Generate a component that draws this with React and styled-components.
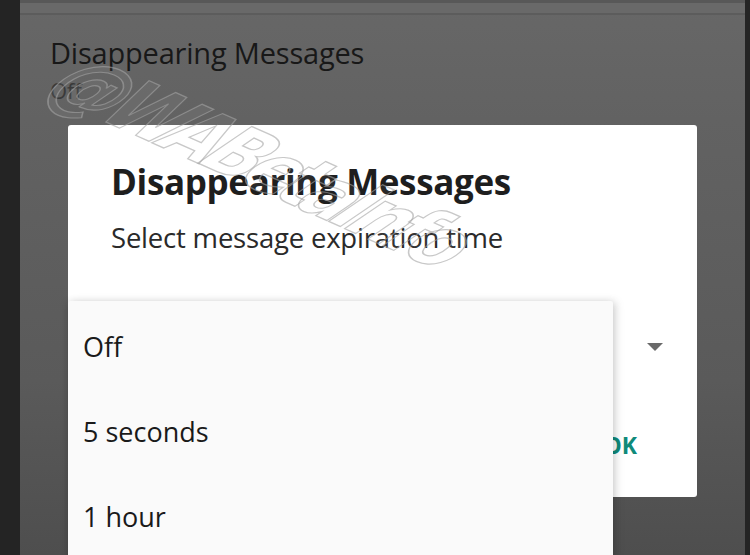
import React from "react";
import styled, { createGlobalStyle } from "styled-components";

const GlobalStyle = createGlobalStyle`
  html, body {
    margin: 0;
    padding: 0;
    background: #252525;
  }
  body {
    font-family: "Open Sans", "Noto Sans", sans-serif;
  }
`;

const Page = styled.div`
  display: flex;
  width: 750px;
  height: 555px;
  overflow: hidden;
  position: relative;
`;

const Strip = styled.div`
  width: ${(p) => p.w}px;
  flex-shrink: 0;
  background: #242424;
`;

const Screen = styled.div`
  flex: 1;
  display: flex;
  flex-direction: column;
  background: linear-gradient(#676767 0, #626262 120px, #5a5a5a 380px, #4e4e4e 555px);
`;

const TopEdge = styled.div`
  height: 10px;
  border-top: 3px solid #585858;
  border-bottom: 2px solid #5c5c5c;
  background: #696969;
`;

const SettingRow = styled.div`
  display: flex;
  flex-direction: column;
  padding: 18px 30px 0;
  height: 92px;
`;

const SettingTitle = styled.div`
  font-size: 29px;
  line-height: 40px;
  color: #181818;
  letter-spacing: -0.2px;
`;

const SettingValue = styled.div`
  font-size: 22px;
  line-height: 34px;
  color: #3a3a3a;
`;

const DialogArea = styled.div`
  padding-left: 48px;
`;

const Dialog = styled.div`
  position: relative;
  width: 629px;
  height: 372px;
  background: #fff;
  border-radius: 3px;
  box-sizing: border-box;
  padding: 33px 43px 0;
  display: flex;
  flex-direction: column;
`;

const Title = styled.div`
  font-size: 35px;
  font-weight: 700;
  line-height: 48px;
  color: #1e1e1e;
  letter-spacing: -0.35px;
`;

const Subtitle = styled.div`
  margin-top: 14px;
  font-size: 27.5px;
  line-height: 36px;
  color: #2a2a2a;
  letter-spacing: -0.2px;
`;

const Spinner = styled.div`
  display: flex;
  justify-content: flex-end;
  margin-right: -10px;
  margin-top: 86px;
`;

const Footer = styled.div`
  display: flex;
  justify-content: flex-end;
  margin-top: 78px;
  padding-right: 17px;
`;

const OkButton = styled.div`
  font-size: 23px;
  font-weight: 700;
  color: #0f8a7a;
  line-height: 30px;
`;

const Menu = styled.div`
  position: absolute;
  left: 0;
  top: 176px;
  width: 545px;
  padding-top: 3px;
  background: #fafafa;
  box-shadow: 0 2px 8px rgba(0, 0, 0, 0.18), 4px 0 10px rgba(0, 0, 0, 0.08);
  border-radius: 2px;
  z-index: 2;
`;

const MenuItem = styled.div`
  height: 85px;
  display: flex;
  align-items: center;
  padding-left: 15px;
  font-size: 27px;
  color: #1a1a1a;
`;

const Watermark = styled.div`
  position: absolute;
  left: 64px;
  top: 30px;
  transform: rotate(24deg) skewX(-24deg);
  transform-origin: left center;
  font-family: "DejaVu Sans Condensed", "DejaVu Sans", sans-serif;
  font-weight: 700;
  font-style: italic;
  font-size: 76px;
  letter-spacing: -8.5px;
  color: rgba(255, 255, 255, 0.05);
  -webkit-text-stroke: 1.3px rgba(163, 163, 163, 0.6);
  white-space: nowrap;
  pointer-events: none;
  z-index: 3;
`;

const Arrow = () => (
  <svg width="18" height="10" viewBox="0 0 18 10">
    <path d="M1 1 L17 1 L9 9 Z" fill="#6a6a6a" />
  </svg>
);

const options = ["Off", "5 seconds", "1 hour"];

export default function App() {
  return (
    <>
      <GlobalStyle />
      <Page>
        <Strip w={20} />
        <Screen>
          <TopEdge />
          <SettingRow>
            <SettingTitle>Disappearing Messages</SettingTitle>
            <SettingValue>Off</SettingValue>
          </SettingRow>
          <DialogArea>
            <Dialog>
              <Title>Disappearing Messages</Title>
              <Subtitle>Select message expiration time</Subtitle>
              <Spinner>
                <Arrow />
              </Spinner>
              <Footer>
                <OkButton>OK</OkButton>
              </Footer>
              <Menu>
                {options.map((o) => (
                  <MenuItem key={o}>{o}</MenuItem>
                ))}
              </Menu>
            </Dialog>
          </DialogArea>
        </Screen>
        <Strip w={5} />
        <Watermark>@WABetaInfo</Watermark>
      </Page>
    </>
  );
}
